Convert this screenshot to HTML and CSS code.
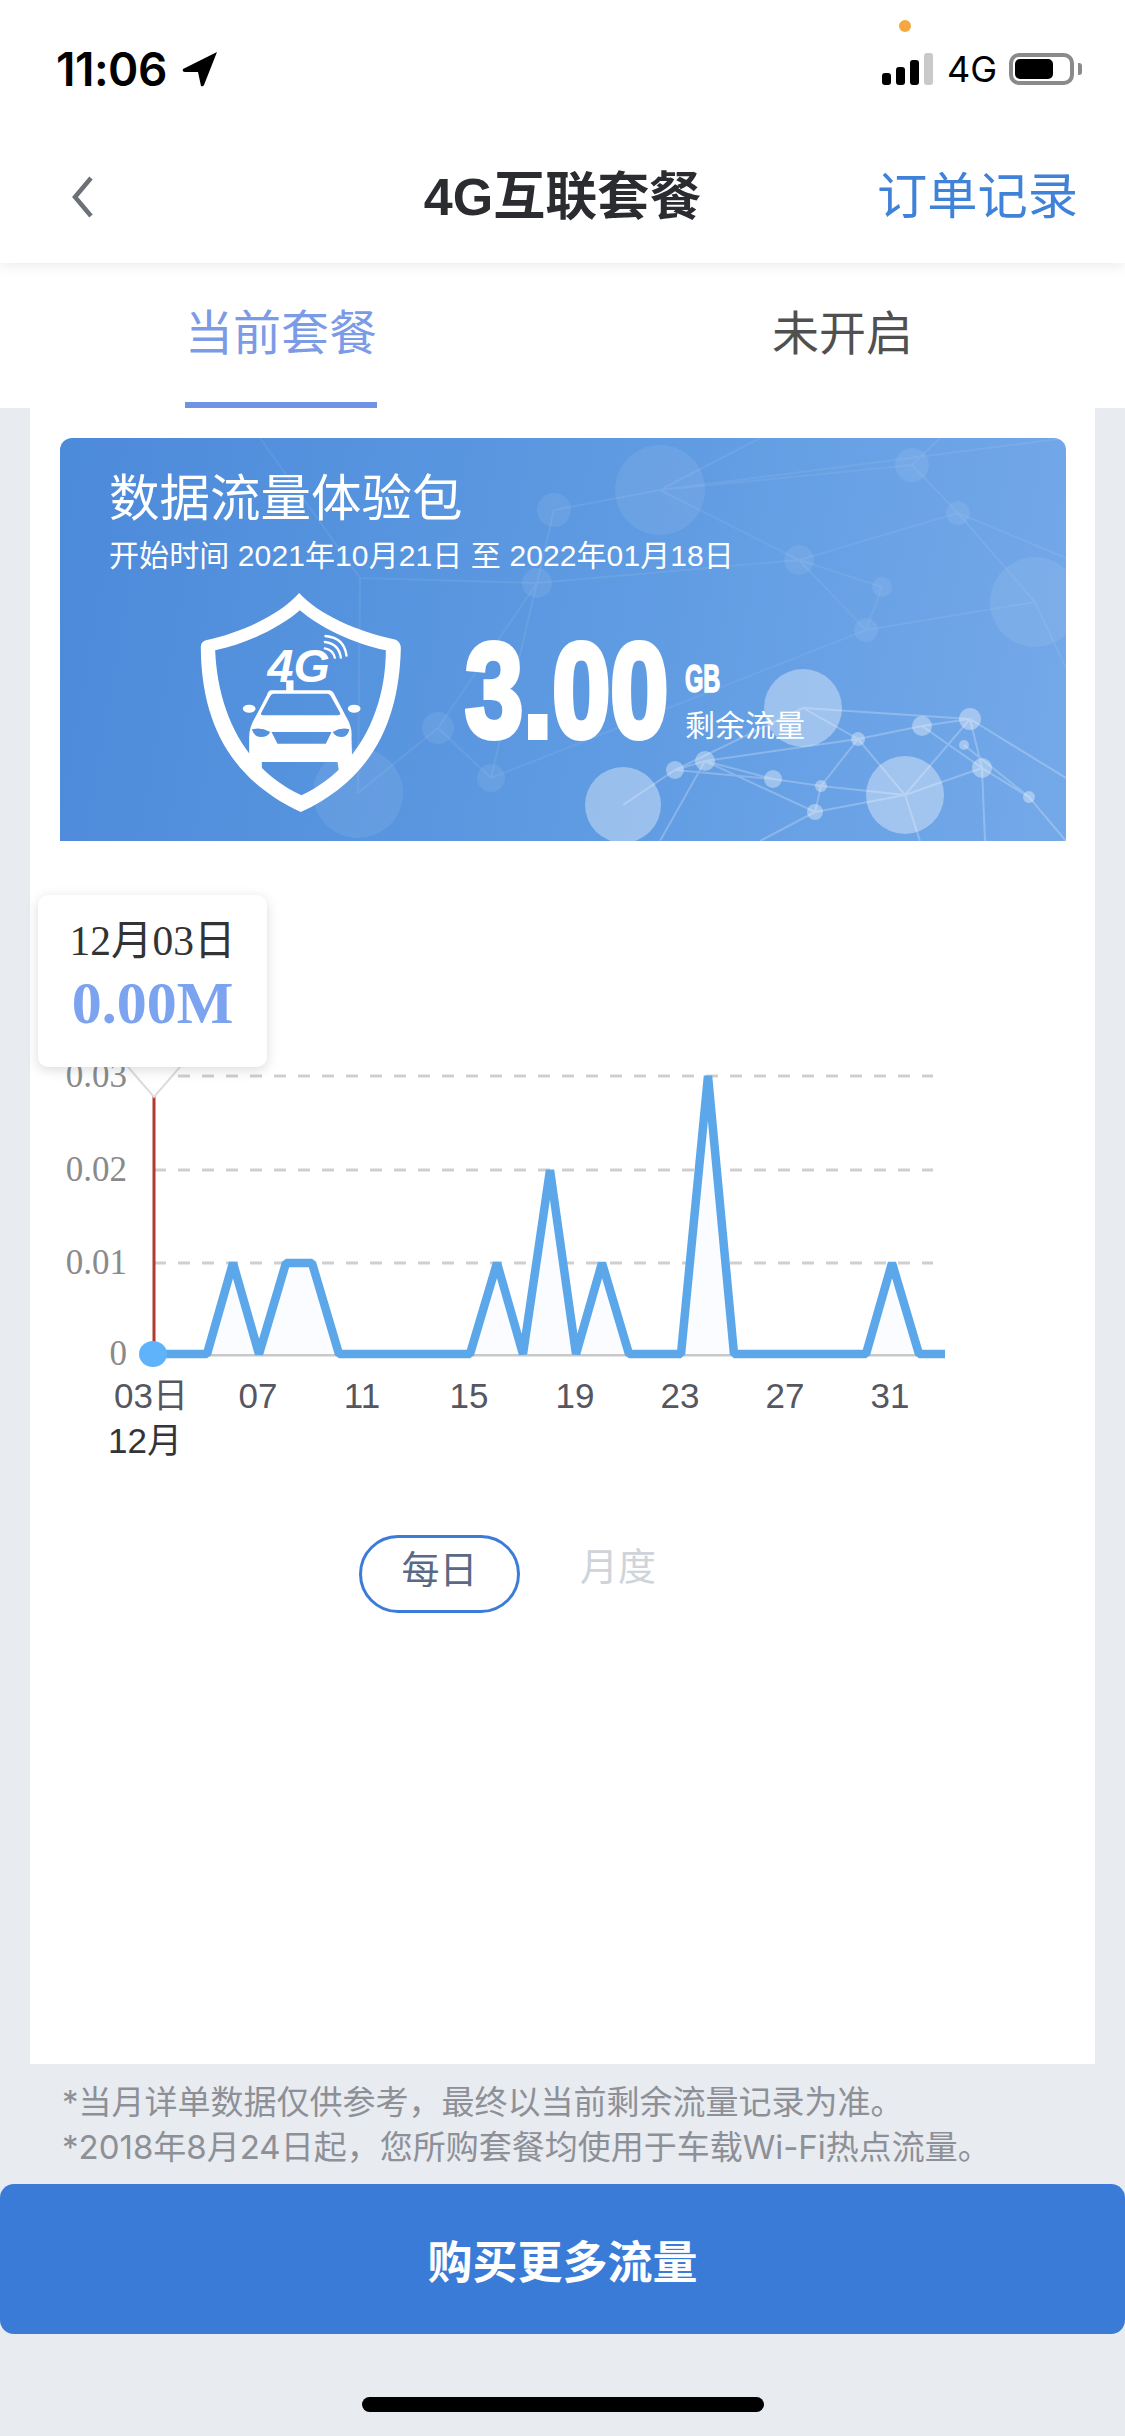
FILE: index.html
```html
<!DOCTYPE html>
<html lang="zh-CN">
<head>
<meta charset="utf-8">
<title>4G互联套餐</title>
<link rel="stylesheet" href="styles.css">
</head>
<body>
<div class="page">
  <header class="top">
    <div class="status">
      <div class="status-left">
        <span class="time">11:06</span>
        <svg class="loc" width="36" height="36" viewBox="0 0 36 36"><path d="M35 1 L1 18 Q0 21 3 21 L16 21 L19 35 Q21 36 22 34 Z"/></svg>
      </div>
      <span class="dot"></span>
      <div class="status-right">
        <div class="signal"><i class="b1"></i><i class="b2"></i><i class="b3"></i><i class="b4"></i></div>
        <span class="net">4G</span>
        <div class="battery"><i class="level"></i></div>
        <i class="cap"></i>
      </div>
    </div>
    <nav class="nav">
      <svg class="back" width="24" height="44" viewBox="0 0 24 44"><path d="M20 3 L4 22 L20 41"/></svg>
      <h1 class="title">4G互联套餐</h1>
      <a class="orders">订单记录</a>
    </nav>
  </header>
  <div class="tabs">
    <div class="tab active">当前套餐</div>
    <div class="tab">未开启</div>
  </div>
  <main class="panel">
    <section class="card">
      <svg class="net-bg" viewBox="0 0 1006 403" preserveAspectRatio="none">
        <g class="faint-lines">
          <path d="M600 52 L852 27 L898 75 L975 164 M600 52 L739 122 L822 149 L806 192 M494 72 L600 52 M739 122 L898 75 L852 27 M739 122 L477 145 M477 145 L494 72 M806 192 L739 122 M806 192 L975 164 L1006 230 M600 52 L1006 0 M700 0 L600 52 M852 27 L880 0 M898 75 L1006 120 M477 145 L378 290 M378 290 L431 340 M431 340 L806 192 M477 145 L431 340 M378 290 L298 355 M300 140 L477 145 M200 0 L300 140 L298 355"/>
        </g>
        <g class="faint">
          <circle cx="600" cy="52" r="45"/><circle cx="494" cy="72" r="17"/><circle cx="852" cy="27" r="17"/><circle cx="898" cy="75" r="12"/><circle cx="739" cy="122" r="15"/><circle cx="822" cy="149" r="10"/><circle cx="477" cy="145" r="15"/><circle cx="806" cy="192" r="12"/><circle cx="975" cy="164" r="45"/><circle cx="378" cy="290" r="16"/><circle cx="431" cy="340" r="14"/><circle cx="298" cy="355" r="45"/>
        </g>
        <g class="bright-lines">
          <path d="M743 270 L910 281 L862 288 L798 301 L645 323 L615 332 L563 367 M743 270 L798 301 L761 348 L713 341 L645 323 L755 374 L845 357 L910 281 M910 281 L922 330 L969 359 L1006 403 M862 288 L922 330 L845 357 L755 374 L700 403 M798 301 L845 357 M615 332 L713 341 M761 348 L755 374 M904 307 L969 359 M910 281 L1006 340 M645 323 L600 403 M761 348 L845 357 L860 403 M922 330 L925 403 M743 270 L615 332"/>
        </g>
        <g class="bright">
          <circle cx="743" cy="270" r="39"/><circle cx="563" cy="367" r="38"/><circle cx="845" cy="357" r="39"/>
        </g>
        <g class="nodes">
          <circle cx="910" cy="281" r="11"/><circle cx="862" cy="288" r="10"/><circle cx="798" cy="301" r="7"/><circle cx="645" cy="323" r="10"/><circle cx="615" cy="332" r="9"/><circle cx="713" cy="341" r="9"/><circle cx="761" cy="348" r="6"/><circle cx="922" cy="330" r="10"/><circle cx="904" cy="307" r="5"/><circle cx="969" cy="359" r="6"/><circle cx="755" cy="374" r="8"/>
        </g>
      </svg>
      <h2 class="card-title">数据流量体验包</h2>
      <p class="card-sub">开始时间 2021年10月21日 至 2022年01月18日</p>
      <div class="card-row">
        <svg class="shield" width="202" height="220" viewBox="55 35 605 660">
          <path class="w" fill-rule="evenodd" d="M355 38 C300 100 190 155 75 180 Q58 185 60 205 C62 400 130 590 360 695 C590 590 655 400 660 205 Q660 185 645 178 C530 155 410 100 355 38 Z M357 90 C300 140 200 190 103 210 C110 380 180 560 362 645 C540 560 615 380 615 210 C515 190 415 140 357 90 Z"/>
          <path class="w" fill-rule="evenodd" d="M272 330 H445 Q455 330 462 345 L495 408 Q515 440 512 470 L514 545 L514 535 L475 578 L470 545 H243 L243 578 L205 535 L205 470 Q205 440 225 408 L258 345 Q262 330 272 330 Z M278 340 H440 Q447 340 450 348 L478 398 Q480 405 472 405 H248 Q238 405 241 398 L268 348 Q271 340 278 340 Z M213 447 Q240 440 268 455 Q262 470 240 470 Q220 470 213 447 Z M506 447 Q480 440 456 455 Q462 470 484 470 Q500 470 506 447 Z M272 455 H452 L435 490 H290 Z"/>
          <ellipse class="w" cx="205" cy="385" rx="19" ry="12"/>
          <ellipse class="w" cx="520" cy="385" rx="19" ry="12"/>
          <rect class="w" x="316" y="300" width="22" height="34"/>
          <text class="shield-4g" x="260" y="306">4G</text>
          <path class="wifi" d="M432 204 Q456 208 462 232 M432 185 Q474 190 480 232 M434 167 Q490 172 497 226"/>
        </svg>
        <div class="value"><span class="value-num">3.00</span></div>
        <div class="unit">
          <div class="unit-gb"><span>GB</span></div>
          <div class="unit-label">剩余流量</div>
        </div>
      </div>
    </section>
    <section class="chart">
      <svg class="chart-svg" width="1065" height="639" viewBox="30 841 1065 639">
        <g class="grid">
          <line x1="154" y1="1076" x2="933" y2="1076"/>
          <line x1="154" y1="1170" x2="933" y2="1170"/>
          <line x1="154" y1="1263" x2="933" y2="1263"/>
        </g>
        <line class="axis" x1="154" y1="1355" x2="945" y2="1355"/>
        <g class="ylabels">
          <text x="127" y="1087">0.03</text>
          <text x="127" y="1181">0.02</text>
          <text x="127" y="1274">0.01</text>
          <text x="127" y="1365">0</text>
        </g>
        <g class="xlabels">
          <text x="151" y="1408">03日</text>
          <text x="258" y="1408">07</text>
          <text x="362" y="1408">11</text>
          <text x="469" y="1408">15</text>
          <text x="575" y="1408">19</text>
          <text x="680" y="1408">23</text>
          <text x="785" y="1408">27</text>
          <text x="890" y="1408">31</text>
        </g>
        <text class="xmonth" x="145" y="1453">12月</text>
        <polygon class="area" points="154,1354 207,1354 233,1263 259,1354 286,1263 312,1263 339,1354 470,1354 497,1263 523,1354 550,1170 576,1354 602,1263 629,1354 681,1354 708,1076 734,1354 866,1354 892,1263 919,1354 945,1354"/>
        <polyline class="series" points="154,1354 207,1354 233,1263 259,1354 286,1263 312,1263 339,1354 470,1354 497,1263 523,1354 550,1170 576,1354 602,1263 629,1354 681,1354 708,1076 734,1354 866,1354 892,1263 919,1354 945,1354"/>
        <line class="cursor" x1="154" y1="1094" x2="154" y2="1354"/>
        <polygon class="pointer" points="122,1060 154,1097 186,1060"/>
        <ellipse class="mark" cx="153" cy="1354" rx="14" ry="13"/>
      </svg>
      <div class="tooltip">
        <div class="tip-date">12月03日</div>
        <div class="tip-value">0.00M</div>
      </div>
    </section>
    <div class="toggle">
      <div class="pill">每日</div>
      <div class="toggle-off">月度</div>
    </div>
  </main>
  <div class="notes">
    <p>*当月详单数据仅供参考，最终以当前剩余流量记录为准。</p>
    <p>*2018年8月24日起，您所购套餐均使用于车载Wi-Fi热点流量。</p>
  </div>
  <button class="buy">购买更多流量</button>
  <div class="home"></div>
</div>
</body>
</html>
```
FILE: styles.css
```css
* { box-sizing: border-box; margin: 0; padding: 0; }
html, body { width: 1125px; height: 2436px; overflow: hidden; }
body { font-family: "Liberation Sans", "Noto Sans CJK SC", sans-serif; background: #e8ebf0; }
.page { width: 1125px; height: 2436px; display: flex; flex-direction: column; background: #e8ebf0; }

.top { height: 263px; background: #fff; box-shadow: 0 3px 12px rgba(90, 100, 130, 0.12); position: relative; z-index: 2; }
.status { height: 131px; padding: 47px 0 0 56px; position: relative; display: flex; justify-content: space-between; align-items: flex-start; }
.status-left { display: flex; align-items: center; gap: 15px; }
.time { font-family: Inter, "Liberation Sans", sans-serif; font-weight: 600; font-size: 46px; line-height: 44px; color: #000; letter-spacing: -0.5px; }
.loc { fill: #000; }
.dot { position: absolute; left: 899px; top: 20px; width: 12px; height: 12px; border-radius: 50%; background: #f5a742; }
.status-right { display: flex; align-items: flex-end; height: 32px; margin: 6px 43px 0 0; }
.signal { display: flex; align-items: flex-end; gap: 5px; height: 32px; margin-right: 14px; }
.signal i { display: block; width: 9px; background: #000; border-radius: 3px; }
.signal .b1 { height: 12px; }
.signal .b2 { height: 18px; }
.signal .b3 { height: 25px; }
.signal .b4 { height: 32px; background: #c9c9c9; }
.net { font-family: Inter, "Liberation Sans", sans-serif; font-size: 36px; font-weight: 400; line-height: 32px; color: #000; width: 62px; }
.battery { width: 65px; height: 32px; border: 4px solid #8a8a8a; border-radius: 10px; padding: 2px; display: flex; }
.battery .level { display: block; width: 38px; background: #000; border-radius: 5px; }
.cap { display: block; width: 4px; height: 12px; background: #8a8a8a; margin: 0 0 10px 4px; border-radius: 0 3px 3px 0; }

.nav { height: 132px; display: flex; align-items: center; justify-content: space-between; padding: 0 47px 0 71px; position: relative; }
.back { fill: none; stroke: #6c7178; stroke-width: 4.5; }
.title { position: absolute; left: 0; right: 0; text-align: center; font-size: 52px; line-height: 132px; font-weight: 700; color: #2a2c30; }
.orders { font-size: 50.250px; line-height: 132px; color: #3f82d8; position: relative; }

.tabs { height: 145px; background: #fff; display: flex; justify-content: space-between; padding: 0 212px 0 185px; }
.tab { padding-top: 45px; height: 145px; font-size: 47px; line-height: 52px; color: #505050; }
.tab.active { width: 192px; font-size: 48px; text-align: center; white-space: nowrap; color: #7c9be6; border-bottom: 6px solid #7093e3; }

.panel { height: 1656px; margin: 0 30px; padding: 30px 29px 0 30px; background: #fff; }
.card { position: relative; height: 403px; border-radius: 12px 12px 0 0; overflow: hidden; padding: 31px 49px 0; color: #fff; background: linear-gradient(100deg, #4c8ada 0%, #5f9be2 55%, #74a9e9 100%); }
.net-bg { position: absolute; left: 0; top: 0; width: 1006px; height: 403px; }
.faint { fill: rgba(255, 255, 255, 0.08); }
.faint-lines { fill: none; stroke: rgba(255, 255, 255, 0.07); stroke-width: 2; }
.bright { fill: rgba(255, 255, 255, 0.36); }
.bright-lines { fill: none; stroke: rgba(255, 255, 255, 0.24); stroke-width: 2; }
.nodes { fill: rgba(255, 255, 255, 0.36); }
.card-title { position: relative; font-size: 50.500px; line-height: 60px; font-weight: 400; }
.card-sub { position: relative; margin-top: 9px; font-size: 30px; line-height: 36px; letter-spacing: 0.100px; white-space: nowrap; }
.card-row { position: relative; display: flex; align-items: flex-start; margin: 18px 0 0 90px; }
.shield { flex: none; }
.w { fill: #fff; }
.wifi { fill: none; stroke: #fff; stroke-width: 7; stroke-linecap: round; }
.shield-4g { font-family: "Liberation Sans", sans-serif; font-size: 140px; font-weight: 700; font-style: italic; fill: #fff; }
.value { width: 203px; margin: 32px 0 0 64px; flex: none; }
.value-num { display: inline-block; font-size: 134px; line-height: 134px; font-weight: 700; white-space: nowrap; transform: scaleX(0.78); transform-origin: left center; -webkit-text-stroke: 6px #fff; }
.unit { margin: 68px 0 0 17px; }
.unit-gb { font-size: 38px; line-height: 38px; font-weight: 700; }
.unit-gb span { display: inline-block; transform: scaleX(0.62); transform-origin: left center; -webkit-text-stroke: 1.500px #fff; }
.unit-label { margin-top: 8px; font-size: 30px; line-height: 40px; white-space: nowrap; }

.chart { position: relative; height: 639px; margin-left: -30px; }
.chart-svg { display: block; }
.grid line { stroke: #cfcfcf; stroke-width: 3; stroke-dasharray: 12 12; }
.axis { stroke: #c8c8c8; stroke-width: 3; }
.ylabels text { font-family: "Liberation Serif", serif; font-size: 35px; fill: #8a8a8a; text-anchor: end; }
.xlabels text { font-family: "Liberation Sans", "Noto Sans CJK SC", sans-serif; font-size: 35px; fill: #55565f; text-anchor: middle; }
.xmonth { font-family: "Liberation Sans", "Noto Sans CJK SC", sans-serif; font-size: 35px; fill: #33343a; text-anchor: middle; }
.area { fill: #fafcff; }
.series { fill: none; stroke: #5ba7ea; stroke-width: 8.500; stroke-linejoin: bevel; }
.cursor { stroke: #b03a2e; stroke-width: 3; }
.pointer { fill: #fff; stroke: #dcdcdc; stroke-width: 2; }
.mark { fill: #5fb3fa; }
.tooltip { position: absolute; left: 8px; top: 54px; width: 229px; height: 172px; padding-top: 22px; background: #fff; border-radius: 10px; box-shadow: 0 3px 12px rgba(80, 90, 110, 0.22); text-align: center; font-family: "Liberation Serif", "Noto Sans CJK SC", serif; }
.tip-date { font-size: 41.500px; line-height: 48px; color: #333; }
.tip-value { margin-top: 6px; font-size: 60px; line-height: 64px; font-weight: 700; color: #7ba3f0; }

.toggle { display: flex; align-items: flex-start; gap: 60px; margin-top: 55px; padding-left: 299px; }
.pill { width: 161px; height: 78px; border: 3px solid #3b7cd8; border-radius: 39px; font-size: 38px; line-height: 64px; color: #5a6a85; text-align: center; }
.toggle-off { font-size: 38px; line-height: 64px; color: #cfd4da; }

.notes { height: 120px; padding: 16px 0 0 62px; font-family: Inter, "Noto Sans CJK SC", sans-serif; font-size: 33px; line-height: 45px; color: #8d9097; white-space: nowrap; }
.buy { display: block; width: 1125px; height: 150px; border: 0; border-radius: 14px; background: #3a7bd8; color: #fff; font-family: inherit; font-size: 45px; font-weight: 700; }
.home { width: 402px; height: 15px; margin: 63px auto 0; border-radius: 8px; background: #000; }
```
